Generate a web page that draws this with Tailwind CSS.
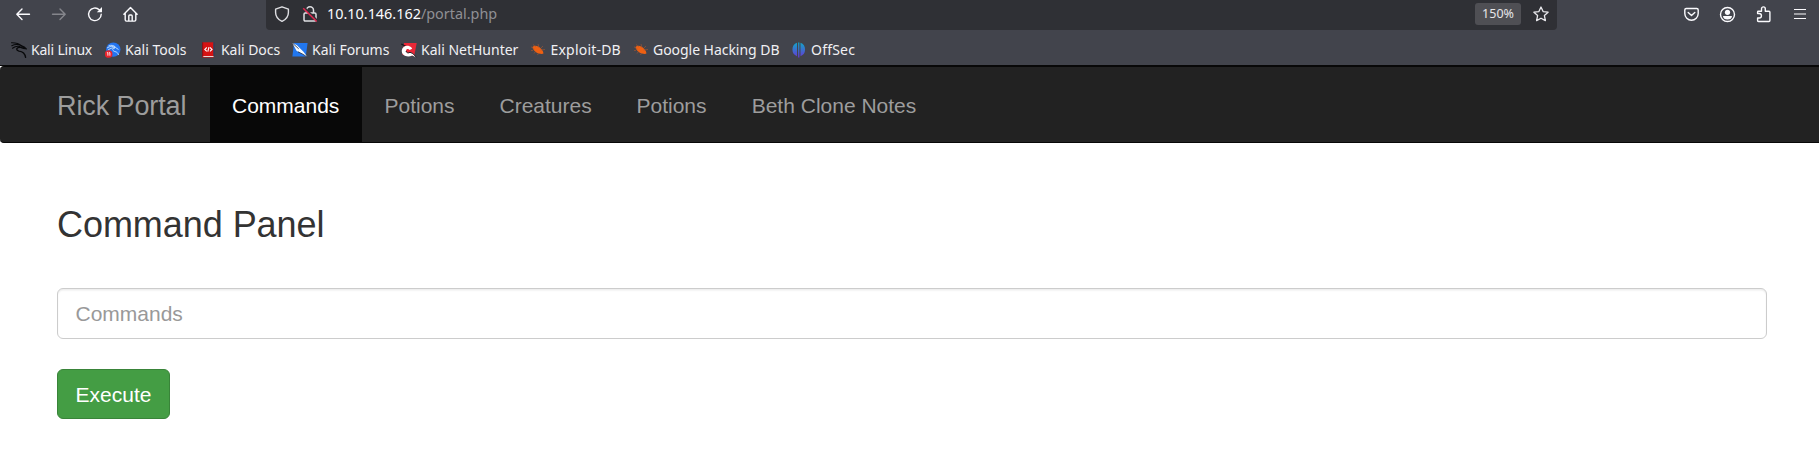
<!DOCTYPE html>
<html lang="en">
<head>
<meta charset="utf-8">
<title>Rick Portal</title>
<script src="https://cdn.jsdelivr.net/npm/@tailwindcss/browser@4"></script>
</head>
<body class="h-[452px] w-[1819px] overflow-hidden bg-white font-['Liberation_Sans',sans-serif] text-[21px] text-[#333]">
<header class="h-[65px] bg-[#42444c] font-['Noto_Sans',sans-serif] text-[#fbfbfe]">
  <div class="flex h-[30px]">
    <div class="flex w-[266px] items-start gap-5 pt-[6px] pl-[15px] text-[#fbfbfe]">
      <svg class="size-4 shrink-0" viewBox="0 0 16 16" fill="none" stroke="currentColor" stroke-width="1.4" stroke-linecap="round" stroke-linejoin="round"><path d="M14.5 8.3H1.8M7 3.1L1.8 8.3 7 13.5"/></svg>
      <svg class="size-4 shrink-0 text-[#85868c]" viewBox="0 0 16 16" fill="none" stroke="currentColor" stroke-width="1.4" stroke-linecap="round" stroke-linejoin="round"><path d="M1.5 8.3h12.7M9 3.1l5.2 5.2L9 13.5"/></svg>
      <svg class="size-4 shrink-0" viewBox="0 0 16 16" fill="none" stroke="currentColor" stroke-width="1.4" stroke-linecap="round"><path d="M14.2 8.3a6.3 6.3 0 1 1-1.9-4.5l1.2 1.2"/><path d="M15 1v5.2H9.8z" fill="currentColor" stroke="none"/></svg>
      <svg class="size-4 shrink-0" viewBox="0 0 16 16" fill="none" stroke="currentColor" stroke-width="1.4" stroke-linecap="round" stroke-linejoin="round"><path d="M.9 8.2L7.500 1.600l6.600 6.600M2.200 7.200v6.600q0 1.300 1.300 1.300h8q1.300 0 1.300-1.300V7.200M5.800 15v-5q0-1 1-1h1.400q1 0 1 1v5"/></svg>
    </div>
    <div class="flex w-[1291px] rounded-b bg-[#2f3035]">
      <div class="flex gap-3 pt-[6px] pl-2">
        <svg class="size-4" viewBox="0 0 16 16" fill="none" stroke="#dedee2" stroke-width="1.4" stroke-linejoin="round"><path d="M8 .8l6.400 2.400v3.300c0 4-2.400 7-6.400 8.900-4-1.900-6.400-4.900-6.400-8.900V3.200z"/></svg>
        <svg class="size-4" viewBox="0 0 16 16" fill="none" stroke="#dedee2" stroke-width="1.5" stroke-linejoin="round"><path d="M4.500 7V4.300a3.500 3.500 0 0 1 7 0V7M3.200 7h9.600q1.200 0 1.200 1.200v5.600q0 1.200-1.200 1.200H3.200Q2 15 2 13.800V8.200Q2 7 3.200 7z"/><path d="M1.800 1.400l13.400 13.400" stroke="#2f3035" stroke-width="2.200"/><path d="M1.200 2.200L14.700 15.500" stroke="#e22850"/></svg>
      </div>
      <div class="ml-[9px] pt-[4px] text-[14.400px] leading-5 whitespace-pre text-[#fbfbfe]">10.10.146.162<span class="text-[#8f8f94]">/portal.php</span></div>
      <div class="mt-[3px] mr-3 ml-auto flex h-[22px] w-[46px] items-center justify-center rounded-[3px] bg-[#4f4f54] pt-px text-[12.500px] text-[#e6e6e9]">150%</div>
      <svg class="mt-[6px] mr-2 size-4" viewBox="0 0 16 16" fill="none" stroke="#e8e8ec" stroke-width="1.300" stroke-linejoin="round"><path d="M8 1l2.100 4.600 5 .6-3.700 3.400 1 5L8 12.200l-4.400 2.400 1-5L.9 6.200l5-.6z"/></svg>
    </div>
    <div class="ml-auto flex gap-[19px] pt-[6px] pr-[11px]">
      <svg class="size-[17px]" viewBox="0 0 17 17" fill="none" stroke="currentColor" stroke-width="1.400" stroke-linecap="round" stroke-linejoin="round"><path d="M3.200 2.500h10.600q1.400 0 1.400 1.400v3.600a6.700 6.700 0 0 1-13.400 0V3.900q0-1.400 1.400-1.400zM5.200 6.500l3.300 3 3.300-3"/></svg>
      <svg class="size-[17px]" viewBox="0 0 17 17"><circle cx="8.500" cy="8.500" r="7" fill="none" stroke="currentColor" stroke-width="1.400"/><circle cx="8.500" cy="6.300" r="2.600" fill="currentColor"/><path d="M4 9.900h9c0 2.200-2 3.600-4.500 3.600S4 12.100 4 9.900z" fill="currentColor"/></svg>
      <svg class="size-[17px]" viewBox="0 0 17 17" fill="none" stroke="currentColor" stroke-width="1.400" stroke-linejoin="round"><path d="M2.600 7.500V6q0-.7.700-.7h3.200V2.800a1.900 1.900 0 0 1 3.800 0v2.500h3.700q.9 0 .9.900v8.400q0 .9-.9.900H3.500q-.9 0-.9-.9V12h1.600a2.200 2.200 0 0 0 0-4.500H2.600z"/></svg>
      <svg class="size-[17px]" viewBox="0 0 17 17" fill="none" stroke="currentColor" stroke-width="1.200"><path d="M3 3.500h12M3 8h12M3 12.500h12"/></svg>
    </div>
  </div>
  <nav class="flex h-[35px] pt-[10px] pl-[11px] text-[14px] leading-5 whitespace-nowrap text-[#f0f0f3]">
    <a class="flex w-[94px] gap-1"><svg class="mt-[2px] size-4 shrink-0" viewBox="0 0 16 16" fill="none" stroke="#08090b" stroke-linecap="round"><path d="M.5.700C5 .600 8 1.500 10.500 3.800M.8 3.700C4 2 7.500 2.300 10.500 3.800M1.500 6.200C4 4.300 6.500 4 9 4.500" stroke-width="1.100"/><path d="M10 3.600l3.200 1.400 1.800 1.700-2.600-.5-2.900-.8C5 5 4.700 8.200 8 9.100c3.700.5 6 2.300 6.600 6.200" stroke-width="1.400"/></svg><span class="tracking-[-0.2px]">Kali Linux</span></a>
    <a class="flex w-[96px] gap-1"><svg class="mt-[2px] size-4 shrink-0" viewBox="0 0 16 16"><circle cx="8.300" cy="7.600" r="7.200" fill="#2475f0"/><path d="M2 6c3-2 6-2 8.500-.5l3 2M3 8c3-2 5-2.500 7-2.200C6 6.500 8 9.200 10 9.600c2 .4 3 1.400 3.500 3.400M3.500 4C6 2.800 8.500 3.200 10.500 5" fill="none" stroke="#c9e3ff" stroke-width=".9"/><circle cx="3.700" cy="12" r="3.800" fill="#e9242c"/><path d="M1.900 10.700h1v3M3.900 10.700h1v3" fill="none" stroke="#fff" stroke-width=".9"/></svg><span>Kali Tools</span></a>
    <a class="flex w-[91px] gap-1"><svg class="mt-[2px] size-4 shrink-0" viewBox="0 0 16 16"><path d="M1.500.3h11v15.200h-11z" fill="#d51313"/><path d="M1.200.3h1v15h-1z" fill="#8e0b10"/><path d="M12.400.3H14v13.500h-1.600z" fill="#343e59"/><path d="M1.500 14h11v1H3z" fill="#ead5d5"/><path d="M5.800 5.500L3.800 7.400l2 1.900M9 5.500l2 1.900-2 1.900M8 5.200L6.800 9.600" fill="none" stroke="#fff" stroke-width="1.100"/></svg><span class="tracking-[-0.05px]">Kali Docs</span></a>
    <a class="flex w-[109px] gap-1"><svg class="mt-[2px] size-4 shrink-0" viewBox="0 0 16 16"><path d="M2 1h13.600L13.800 14.600H.4z" fill="#2277ee"/><path d="M.2.800L5 3.200l6.500 6.500 4.200 5.700-6-3.700-5.200-3z" fill="#f7fbff"/><path d="M.2.800l6.500 6M6 9.800l5 2.500 4.700 3.100" stroke="#17263e" fill="none" stroke-width=".8"/></svg><span>Kali Forums</span></a>
    <a class="flex w-[129px] gap-1"><svg class="mt-[2px] size-4 shrink-0" viewBox="0 0 16 16"><path d="M3 1h12.700L13.200 14 1.500 13z" fill="#e92837"/><path d="M.3 2L5 4.500" stroke="#15171c" stroke-width="1.300"/><path d="M.8 8.200C1.500 4.500 5 3 8.500 4.200c1.500.6 2.200 1.500 2.700 2.600L8.600 8C7.500 6.300 5 6.800 5 8.800c0 2 2.500 2.700 4 1.500l2.600.9 3.900 4.200-4.300-1.800C6 15.800.3 13.500.8 8.200z" fill="#fff"/><path d="M5 9c.3 1.800 2.500 2.500 4 1.300l2.800 1.200 3.800 4" fill="none" stroke="#252125"/></svg><span>Kali NetHunter</span></a>
    <a class="flex w-[103px] gap-1"><svg class="mt-[2px] size-4 shrink-0" viewBox="0 0 16 16"><path d="M2.500 5C4.500 2.800 8 3.500 10.800 6.500c2 2 2.800 3.800 2.500 5.300C9.300 12.500 3.500 10.300 2.500 5z" fill="#ee6012"/><path d="M1 4.800L4.500 7M3 2.500L6 5M8 2l1 4M10.500 8l4.500-.5M11 6l2-2M3 8.500H1M5.500 9.500L4 11.500M8.500 11l-1 2" stroke="#aa5730" fill="none" stroke-width=".6"/></svg><span class="ml-[0.500px] tracking-[0.200px]">Exploit-DB</span></a>
    <a class="flex w-[158px] gap-1"><svg class="mt-[2px] size-4 shrink-0" viewBox="0 0 16 16"><path d="M2.500 5C4.500 2.800 8 3.500 10.800 6.500c2 2 2.800 3.800 2.500 5.300C9.300 12.500 3.500 10.300 2.500 5z" fill="#ee6012"/><path d="M1 4.800L4.500 7M3 2.500L6 5M8 2l1 4M10.500 8l4.500-.5M11 6l2-2M3 8.500H1M5.500 9.500L4 11.500M8.500 11l-1 2" stroke="#aa5730" fill="none" stroke-width=".6"/></svg><span class="tracking-[-0.040px]">Google Hacking DB</span></a>
    <a class="flex gap-1"><svg class="mt-[2px] size-4 shrink-0" viewBox="0 0 16 16"><defs><linearGradient id="o" x2="0" y2="1"><stop stop-color="#11a6c8"/><stop offset="1" stop-color="#6637d4"/></linearGradient></defs><path d="M6 .8v13.400A7.200 7.200 0 0 1 6 .8zM9.500 .8v13.400A7.200 7.200 0 0 0 9.500 .8zM7.100.5h1.300v15H7.100z" fill="url(#o)"/></svg><span class="tracking-[0.200px]">OffSec</span></a>
  </nav>
</header>
<div class="bg-white">
  <div class="h-px bg-[#080808]"></div>
  <nav class="flex h-[77px] rounded-l-[4px] border-y border-[#080808] bg-[#222] pl-[57px] leading-[30px] text-[#9d9d9d]">
    <a class="w-[153px] pt-[24px] text-[27px] tracking-[-0.100px]">Rick Portal</a>
    <a class="w-[152px] bg-[#080808] pt-[24px] pl-[22px] text-white">Commands</a>
    <a class="w-[115px] pt-[24px] pl-[22.500px]">Potions</a>
    <a class="w-[137px] pt-[24px] pl-[22.500px]">Creatures</a>
    <a class="w-[115px] pt-[24px] pl-[22.500px]">Potions</a>
    <a class="pt-[24px] pl-[22.700px]">Beth Clone Notes</a>
  </nav>
</div>
<main class="pt-[62px] pr-[52px] pl-[57px]">
  <h1 class="h-[83px] text-[36px] leading-[40px] tracking-[-0.050px]">Command Panel</h1>
  <input class="block h-[51px] w-full rounded-[6px] border border-[#ccc] px-[17.500px] text-[21px] shadow-[inset_0_1.500px_1.500px_rgba(0,0,0,0.075)] outline-none placeholder:text-[#999]" placeholder="Commands">
  <button class="mt-[30px] block h-[50px] w-[113px] rounded-[6px] border border-[#398439] bg-[#449d44] pt-[2px] text-white">Execute</button>
</main>
</body>
</html>
